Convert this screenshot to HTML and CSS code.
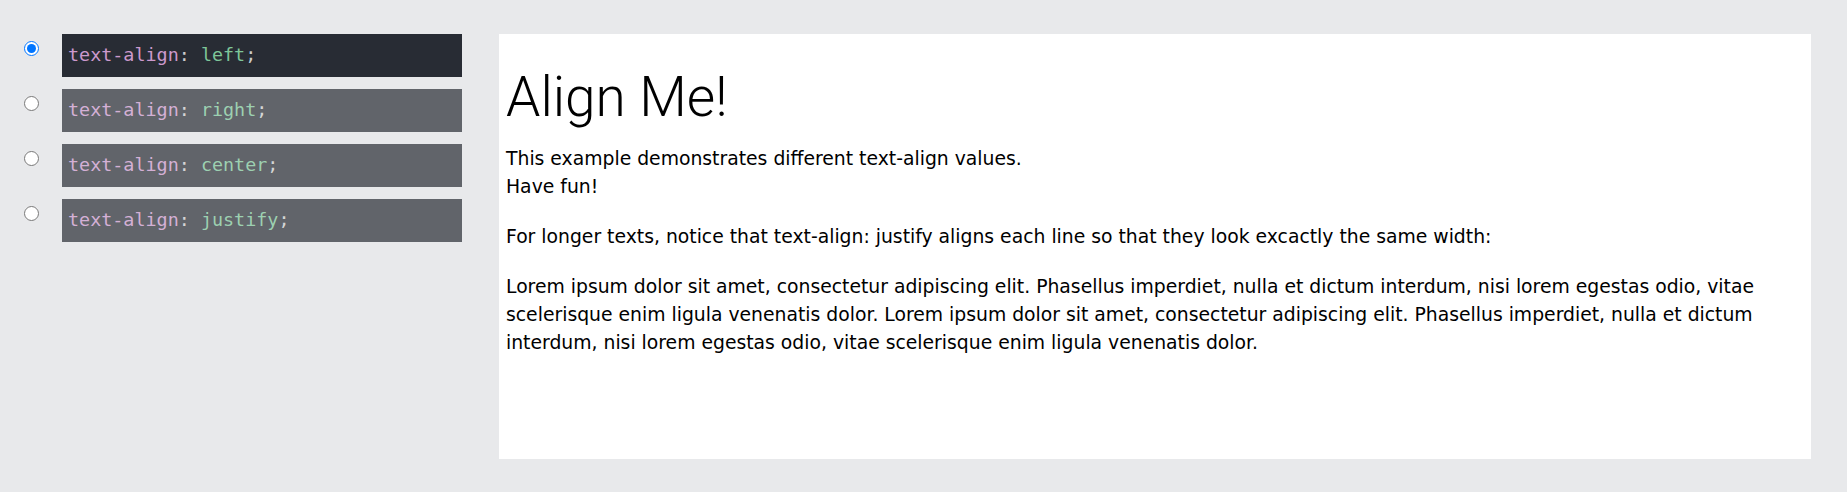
FILE: index.html
```html
<!DOCTYPE html>
<html lang="en">
<head>
<meta charset="utf-8">
<title>text-align</title>
<link rel="stylesheet" href="styles.css">
</head>
<body>
<div class="page">
  <div class="choices">
    <label class="choice active">
      <input type="radio" name="align" checked>
      <code class="code"><span class="prop">text-align</span><span class="punc">:</span> <span class="val">left</span><span class="punc">;</span></code>
    </label>
    <label class="choice">
      <input type="radio" name="align">
      <code class="code"><span class="prop">text-align</span><span class="punc">:</span> <span class="val">right</span><span class="punc">;</span></code>
    </label>
    <label class="choice">
      <input type="radio" name="align">
      <code class="code"><span class="prop">text-align</span><span class="punc">:</span> <span class="val">center</span><span class="punc">;</span></code>
    </label>
    <label class="choice">
      <input type="radio" name="align">
      <code class="code"><span class="prop">text-align</span><span class="punc">:</span> <span class="val">justify</span><span class="punc">;</span></code>
    </label>
  </div>
  <div class="output">
    <h1 class="title">Align Me!</h1>
    <p class="para">This example demonstrates different text-align values.<br>Have fun!</p>
    <p class="para">For longer texts, notice that text-align: justify aligns each line so that they look excactly the same width:</p>
    <p class="para">Lorem ipsum dolor sit amet, consectetur adipiscing elit. Phasellus imperdiet, nulla et dictum interdum, nisi lorem egestas odio, vitae scelerisque enim ligula venenatis dolor. Lorem ipsum dolor sit amet, consectetur adipiscing elit. Phasellus imperdiet, nulla et dictum interdum, nisi lorem egestas odio, vitae scelerisque enim ligula venenatis dolor.</p>
  </div>
</div>
</body>
</html>
```

FILE: styles.css
```css
html, body {
  margin: 0;
  padding: 0;
  background: #e8e9eb;
}

.page {
  display: flex;
  gap: 37px;
  padding: 34px 36px 33px 24px;
  height: 492px;
  box-sizing: border-box;
}

.choices {
  width: 438px;
  flex: none;
  display: flex;
  flex-direction: column;
  gap: 12px;
}

.choice {
  display: flex;
  align-items: flex-start;
  gap: 23px;
  cursor: pointer;
}

.choice input {
  width: 15px;
  height: 15px;
  margin: 6.5px 0 0 0;
  flex: none;
}

.code {
  display: block;
  flex: 1;
  height: 43px;
  box-sizing: border-box;
  padding: 0 6px;
  line-height: 41px;
  background: #282c34;
  font-family: "DejaVu Sans Mono", "Liberation Mono", monospace;
  font-size: 18.4px;
  white-space: pre;
  color: #cccccc;
}

.choice:not(.active) .code {
  opacity: 0.7;
}

.prop {
  color: #cc99cd;
}

.val {
  color: #7ec699;
}

.punc {
  color: #cccccc;
}

.output {
  flex: 1;
  height: 425px;
  box-sizing: border-box;
  background: #ffffff;
  padding: 8px 8px 8px 7px;
  color: #000000;
  font-family: "DejaVu Sans", "Liberation Sans", sans-serif;
  font-size: 18.8px;
  line-height: 28.3px;
}

.title {
  font-family: Roboto, "Open Sans", sans-serif;
  font-weight: 300;
  font-size: 55px;
  line-height: 64px;
  margin: 22.5px 0 16px;
}

.para {
  margin: 0 0 21.7px;
}
```
